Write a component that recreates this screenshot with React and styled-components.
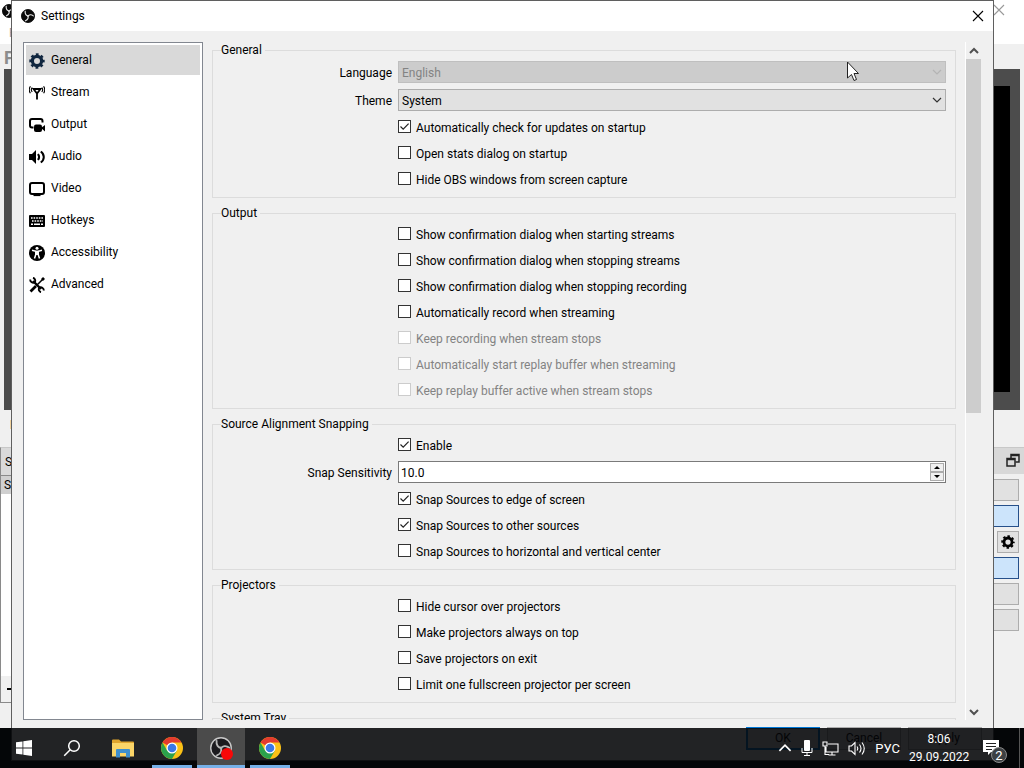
import React from "react"
import styled, { createGlobalStyle } from "styled-components"

const GlobalStyle = createGlobalStyle`
  * {
    box-sizing: border-box;
  }
  body {
    margin: 0;
    overflow: hidden;
  }
  body, button, input, select {
    font-family: Roboto, "Open Sans", sans-serif;
    font-size: 12px;
    line-height: 17px;
    color: #000;
  }
  svg {
    display: block;
    flex: none;
  }
`

const Desktop = styled.div`
  position: relative;
  height: 100vh;
  padding-bottom: 40px;
  overflow: hidden;
  background: #05090f;
`

/* main window, mostly covered by the dialog */

const MainWindow = styled.div`
  display: flex;
  flex-direction: column;
  height: 100%;
  background: #f0f0f0;
`

const MainHeader = styled.div`
  height: 44px;
  padding: 4px 19px 0 2px;
  background: #fff;
  color: #999;
`

const MainTitle = styled.div`
  display: flex;
  justify-content: space-between;
`

const MenuBar = styled.div`
  padding: 7px;
`

const PreviewTitle = styled.div`
  height: 25px;
  padding: 5px 4px;
  font-size: 18px;
  font-weight: bold;
  color: #8c8c8c;
`

const Preview = styled.div`
  flex: 1;
  margin: 0 4px;
  padding: 17px 10px 18px;
  background: #4c4c4c;
`

const PreviewCanvas = styled.div`
  height: 100%;
  background: #000;
`

const SourceBar = styled.div`
  height: 37px;
  padding: 7px 10px;
`

const Docks = styled.div`
  display: flex;
  justify-content: space-between;
  height: 281px;
`

const SceneDock = styled.div`
  width: 200px;
  height: 256px;
  display: flex;
  flex-direction: column;
  border: 1px solid #8a8a8a;
  border-top-color: #c8c8c8;
`

const DockTitle = styled.div`
  height: 27px;
  padding: 6px 4px;
  background: #dadada;
`

const SceneHeader = styled.div`
  height: 19px;
  padding: 1px 3px 0;
  background: #d0d0d0;
  border-top: 1px solid #8a8a8a;
`

const SceneList = styled.div`
  flex: 1;
  background: #fff;
`

const SceneTools = styled.div`
  height: 26px;
  padding: 12px 6px;
`

const Minus = styled.div`
  width: 8px;
  height: 2px;
  background: #000;
`

const ControlsDock = styled.div`
  width: 200px;
`

const ControlsTitle = styled.div`
  display: flex;
  justify-content: flex-end;
  height: 27px;
  padding: 5px 4px;
  margin-bottom: 5px;
  background: #d8d8d8;
  border-top: 1px solid #c8c8c8;
`

const ControlsList = styled.div`
  display: flex;
  flex-direction: column;
  align-items: flex-end;
  gap: 4px;
  padding-right: 5px;
`

const ControlButton = styled.button`
  width: ${props => (props.$small ? "22px" : "100%")};
  height: 22px;
  padding: 3px;
  border: 1px solid ${props => (props.$on ? "#26508a" : "#adadad")};
  background: ${props => (props.$on ? "#cce4fb" : "#e1e1e1")};
`

/* settings dialog */

const Dialog = styled.div`
  position: absolute;
  top: 0;
  right: 30px;
  bottom: 7px;
  left: 11px;
  display: flex;
  flex-direction: column;
  border: 1px solid #5f5f5f;
  background: #f0f0f0;
`

const TitleBar = styled.div`
  display: flex;
  align-items: center;
  gap: 6px;
  height: 30px;
  padding: 0 9px;
  background: #fff;
`

const Title = styled.div`
  flex: 1;
`

const PlainButton = styled.button`
  display: flex;
  align-items: center;
  justify-content: center;
  padding: 0;
  border: 0;
  background: none;
`

const DialogMain = styled.div`
  flex: 1;
  display: flex;
  min-height: 0;
  padding: 11px 12px 0 11px;
`

const Sidebar = styled.nav`
  width: 180px;
  display: flex;
  flex-direction: column;
  gap: 2px;
  padding: 2px;
  margin-right: 9px;
  border: 1px solid #828790;
  background: #fff;
`

const SidebarItem = styled.a`
  display: flex;
  align-items: center;
  gap: 6px;
  height: 30px;
  padding: 1px 3px 0;
  color: #000;
  text-decoration: none;
  background: ${props => (props.$active ? "#d9d9d9" : "none")};
`

const Groups = styled.div`
  flex: 1;
  min-width: 0;
  display: flex;
  flex-direction: column;
  gap: 7px;
  overflow: hidden;
`

const Group = styled.fieldset`
  flex: none;
  min-width: 0;
  margin: 0;
  padding: 2px 9px 8px 8px;
  border: 1px solid #dcdcdc;
`

const GroupTitle = styled.legend`
  padding: 0 3px 0 0;
  line-height: 17px;
  background: #f0f0f0;
`

const GroupGrid = styled.div`
  display: grid;
  grid-template-columns: 171px 1fr;
  gap: 6px;
  align-items: center;
`

const FieldLabel = styled.label`
  padding-top: 2px;
  text-align: right;
`

const CheckRow = styled.label`
  grid-column: 2;
  display: flex;
  align-items: center;
  gap: 5px;
  height: 20px;
  padding-top: 2px;
  color: ${props => (props.$disabled ? "#838383" : "#000")};
`

const CheckBox = styled.input`
  appearance: none;
  width: 13px;
  height: 13px;
  margin: 0 0 3px;
  border: 1px solid #333;
  background: #fff;

  &:disabled {
    border-color: #ccc;
  }
  &:checked {
    background: #fff url("data:image/svg+xml,%3Csvg xmlns='http://www.w3.org/2000/svg' viewBox='0 0 11 11'%3E%3Cpath d='M1.5 5.5 4.2 8.2 9.6 2.6' fill='none' stroke='%23222' stroke-width='1.2'/%3E%3C/svg%3E");
  }
`

const SelectBox = styled.div`
  display: grid;
  align-items: center;
  color: ${props => (props.$disabled ? "#b4b4b4" : "#333")};

  > * {
    grid-area: 1 / 1;
  }
  > svg {
    justify-self: end;
    margin-right: 4px;
    pointer-events: none;
  }
`

const Select = styled.select`
  appearance: none;
  width: 100%;
  height: 22px;
  padding: 2px 3px 0;
  border: 1px solid #adadad;
  border-radius: 0;
  background: #e1e1e1;

  &:disabled {
    border-color: #bfbfbf;
    background: #ccc;
    color: #838383;
    opacity: 1;
  }
`

const SpinBox = styled.div`
  display: flex;
  height: 22px;
  padding: 1px;
  border: 1px solid #7a7a7a;
  background: #fff;
`

const SpinInput = styled.input`
  flex: 1;
  min-width: 0;
  padding: 2px 1px 0;
  border: 0;
  outline: 0;
`

const SpinButtons = styled.div`
  width: 14px;
  display: flex;
  flex-direction: column;
`

const SpinButton = styled(PlainButton)`
  flex: 1;
  border: 1px solid #acacac;
  background: #f0f0f0;
`

const ScrollBar = styled.div`
  width: 16px;
  display: flex;
  flex-direction: column;
  margin-left: 9px;
  border-left: 1px solid #fff;
`

const ScrollButton = styled(PlainButton)`
  height: 17px;
  color: #505050;
`

const ScrollTrack = styled.div`
  flex: 1;
`

const ScrollThumb = styled.div`
  height: 55%;
  background: #cdcdcd;
`

const DialogFooter = styled.div`
  display: flex;
  justify-content: flex-end;
  gap: 7px;
  padding: 7px 11px 10px;
`

const DialogButton = styled.button`
  width: 74px;
  height: 23px;
  padding: 0;
  border: ${props => (props.$primary ? "2px solid #0078d7" : "1px solid #adadad")};
  background: #e1e1e1;
`

/* taskbar */

const Taskbar = styled.div`
  position: absolute;
  right: 0;
  bottom: 0;
  left: 0;
  display: flex;
  height: 40px;
  background: rgba(4, 6, 8, 0.88);
  color: #fff;
`

const TaskButton = styled.button`
  display: flex;
  flex-direction: column;
  align-items: center;
  justify-content: center;
  width: 48px;
  padding: 0;
  border: 0;
  background: ${props => (props.$active ? "#4b4b4b" : "none")};
  color: #fff;
`

const TaskApps = styled.div`
  flex: 1;
  display: flex;
  gap: 1px;
  margin-left: 3px;
`

const AppButton = styled(TaskButton)`
  padding: ${props => (props.$open ? "3px 0 0" : "0")};
  justify-content: ${props => (props.$open ? "space-between" : "center")};

  &::before {
    content: "";
  }
  &::after {
    content: "";
    width: ${props => (props.$active ? "48px" : "40px")};
    height: ${props => (props.$open ? "3px" : "0")};
    background: #76b0e8;
  }
`

const Tray = styled.div`
  display: flex;
  align-items: center;
  gap: 9px;
`

const TrayText = styled.div`
  font-size: 13px;
  color: #fff;
`

const Clock = styled.div`
  width: 60px;
  text-align: center;
  line-height: 18px;
  color: #fff;
`

const Notifications = styled(PlainButton)`
  justify-content: flex-start;
  width: 41px;
  height: 40px;
  padding-left: 5px;
`

const ShowDesktop = styled.div`
  width: 5px;
  height: 40px;
  border-left: 1px solid #555;
`

const TrayEnd = styled.div`
  display: flex;
`

/* one blade of the logo, drawn three times around the centre */
const ObsLogo = ({ size = 14, disc = "#0a0a0a", ring = "#0a0a0a", blade = "#e8e8e8" }) => (
  <svg width={size} height={size} viewBox="0 0 24 24">
    <circle cx="12" cy="12" r="11.200" fill={disc} stroke={ring} strokeWidth="1.500" />
    {[0, 120, 240].map(angle => (
      <path
        key={angle}
        d="M12.500 12C9 11.500 6.500 9 7.200 4.200"
        transform={`rotate(${angle} 12 12)`}
        fill="none"
        stroke={blade}
        strokeWidth="2"
        strokeLinecap="round"
      />
    ))}
  </svg>
)

const GearIcon = ({ size = 16, color = "#000" }) => (
  <svg width={size} height={size} viewBox="0 0 16 16" fill="none" stroke={color}>
    <circle cx="8" cy="8" r="4.6" strokeWidth="3.2" />
    <circle cx="8" cy="8" r="6.6" strokeWidth="2.2" strokeDasharray="2.8 2.384" strokeDashoffset="1.4" />
  </svg>
)

const StreamIcon = () => (
  <svg width="16" height="16" viewBox="0 0 16 16" fill="none" stroke="#000">
    <path d="M4.500 4h7L8 8.500zM8 7v7.500" strokeWidth="1.800" />
    <path d="M3.200 2.500C2 4 2 5.500 3.200 7M12.800 2.500c1.200 1.500 1.200 3 0 4.500M1.400 1.200C-.1 3.500-.1 6 1.400 8.300M14.600 1.200c1.500 2.300 1.500 4.800 0 7.100" strokeWidth="1.100" />
  </svg>
)

const OutputIcon = () => (
  <svg width="16" height="16" viewBox="0 0 16 16">
    <path d="M4.500 10.500H3a2 2 0 0 1-2-2V4a2 2 0 0 1 2-2h8.500a2 2 0 0 1 2 2v1.500" fill="none" stroke="#000" strokeWidth="2" />
    <rect x="5" y="7.500" width="8" height="7.500" rx="2" />
    <path d="m12 11 4-3v6.500z" />
  </svg>
)

const AudioIcon = () => (
  <svg width="16" height="16" viewBox="0 0 16 16">
    <path d="M0 5h3l4-4v14l-4-4H0z" />
    <path d="M9 5c1.500 2 1.500 4 0 6M11.800 2.500c4 3 4 8 0 11" fill="none" stroke="#000" strokeWidth="2" />
  </svg>
)

const VideoIcon = () => (
  <svg width="16" height="16" viewBox="0 0 16 16">
    <rect x="1" y="2" width="14" height="11" rx="2" fill="none" stroke="#000" strokeWidth="2" />
    <path d="M4.500 14.500h7" stroke="#000" strokeWidth="1.200" />
  </svg>
)

const HotkeysIcon = () => (
  <svg width="16" height="16" viewBox="0 0 16 16">
    <rect y="2" width="16" height="12" rx="1" />
    <path d="M2 5h12M3 8h11" stroke="#fff" strokeWidth="1.600" strokeDasharray="1.600 1" />
    <path d="M2 11.200h2m1 0h6m1 0h2" stroke="#fff" strokeWidth="1.500" />
  </svg>
)

const AccessibilityIcon = () => (
  <svg width="16" height="16" viewBox="0 0 16 16">
    <circle cx="8" cy="8" r="8" />
    <circle cx="8" cy="3.200" r="1.500" fill="#fff" />
    <path d="M3 5.300 6.800 6.300v3.200L5.500 13.500M13 5.300 9.200 6.300v3.200l1.300 4" fill="none" stroke="#fff" strokeWidth="1.500" />
    <path d="M6.200 5.700h3.600V10H6.200z" fill="#fff" />
  </svg>
)

const AdvancedIcon = () => (
  <svg width="16" height="16" viewBox="0 0 16 16" fill="none" stroke="#000">
    <path d="m4 4 8 8" strokeWidth="2.400" />
    <path d="M1.200 2.500a3 3 0 0 0 4.600 2.700A3 3 0 0 0 4 .8M14.800 13.500a3 3 0 0 0-4.600-2.700 3 3 0 0 0 1.800 4.400" strokeWidth="1.900" />
    <path d="M14.800 1.200 7.500 8.500" strokeWidth="1.500" />
    <path d="m13 3 2-2M7 9l-5.500 5.500" strokeWidth="2.800" />
  </svg>
)

const CloseIcon = ({ color = "#000" }) => (
  <svg width="12" height="12" viewBox="0 0 12 12" fill="none" stroke={color}>
    <path d="m1 1 10 10M11 1 1 11" strokeWidth="1.100" />
  </svg>
)

const Chevron = ({ up, bold, size = 10 }) => (
  <svg width={size} height={size} viewBox="0 0 10 10" fill="none" stroke="currentColor">
    <path d={up ? "m1 7 4-4 4 4" : "m1 3 4 4 4-4"} strokeWidth={bold ? 2 : 1.2} />
  </svg>
)

const Triangle = ({ up }) => (
  <svg width="6" height="3" viewBox="0 0 6 3">
    <path d={up ? "M0 3 3 0l3 3z" : "M0 0l3 3 3-3z"} />
  </svg>
)

const FloatIcon = () => (
  <svg width="14" height="14" viewBox="0 0 14 14" fill="none" stroke="#222" strokeWidth="1.500">
    <path d="M5 5V1.500h8V9H9.500M5 2.500h8" />
    <path d="M1 5.500h8V13H1zM1 6.500h8" />
  </svg>
)

const Cursor = styled.svg`
  position: absolute;
  top: 61px;
  left: 846px;
  pointer-events: none;
`

const StartIcon = () => (
  <svg width="16" height="16" viewBox="0 0 16 16" fill="#fff">
    <path d="M0 2.300 6.500 1.400v6.200H0zM7.300 1.300 16 0v7.600H7.300zM0 8.400h6.500v6.200L0 13.700zM7.300 8.400H16V16l-8.700-1.300z" />
  </svg>
)

const SearchIcon = () => (
  <svg width="18" height="18" viewBox="0 0 18 18" fill="none" stroke="#fff" strokeWidth="1.500">
    <circle cx="11" cy="7" r="5.300" />
    <path d="m7.200 10.800-6 6" />
  </svg>
)

const FolderIcon = () => (
  <svg width="22" height="19" viewBox="0 0 22 19">
    <path d="M0 1.500Q0 .5 1 .5h6l2 2h12q1 0 1 1V17H0z" fill="#e0a52e" />
    <path d="M0 4h22v13.500H0z" fill="#fbd568" />
    <path d="M4 18.500V11q0-1 1-1h12q1 0 1 1v7.500h-4V14H8v4.500z" fill="#3f8fcd" />
  </svg>
)

const ChromeIcon = () => (
  <svg width="22" height="22" viewBox="0 0 22 22">
    <circle cx="11" cy="11" r="11" fill="#fbc116" />
    <path d="M11 11 1.500 5.500A11 11 0 0 1 20.500 5.500H11z" fill="#e33b2e" />
    <path d="M1.500 5.500A11 11 0 0 0 11 22l4.800-8.200L11 11 6.200 13.800z" fill="#2ba24c" />
    <circle cx="11" cy="11" r="5.500" fill="#fff" />
    <circle cx="11" cy="11" r="4.300" fill="#3b78e7" />
  </svg>
)

const LiveLogo = styled.span`
  position: relative;

  &::after {
    content: "";
    position: absolute;
    right: -1px;
    bottom: -1px;
    width: 12px;
    height: 12px;
    border-radius: 50%;
    background: #f80808;
  }
`

const MicIcon = () => (
  <svg width="12" height="16" viewBox="0 0 12 16">
    <rect x="3" y="0" width="6" height="11" rx="1" fill="#fff" />
    <path d="M1 8v4.500h10V8M6 12v3M3 15.500h6" fill="none" stroke="#fff" />
  </svg>
)

const NetworkIcon = () => (
  <svg width="17" height="15" viewBox="0 0 17 15" fill="none" stroke="#fff" strokeWidth="1.100">
    <path d="M6 3h10v8H4V6M10 11v3M6.500 14h7M1 1h4v4H1zM3 5v8.500h4" />
  </svg>
)

const VolumeIcon = () => (
  <svg width="18" height="15" viewBox="0 0 18 15" fill="none" stroke="#fff" strokeWidth="1.100">
    <path d="M1 5h2.500L7 1.500v12L3.500 10H1zM9 5.500q1.500 2 0 4M11.500 3.500q3 4 0 8M14 1.500q4.500 6 0 12" />
  </svg>
)

const NotificationIcon = () => (
  <svg width="26" height="32" viewBox="0 0 26 32">
    <path d="M0 8h16v12H8l-3 3v-3H0z" fill="#fff" />
    <path d="M3 11.500h10M3 14.500h10M3 17.500h6" stroke="#222" />
    <circle cx="16" cy="23" r="7.500" fill="#3c4043" stroke="#8a8a8a" />
    <text x="16" y="27.500" fill="#fff" fontSize="13" textAnchor="middle">2</text>
  </svg>
)

const sections = [
  ["General", () => <GearIcon color="#10263f" />],
  ["Stream", StreamIcon],
  ["Output", OutputIcon],
  ["Audio", AudioIcon],
  ["Video", VideoIcon],
  ["Hotkeys", HotkeysIcon],
  ["Accessibility", AccessibilityIcon],
  ["Advanced", AdvancedIcon],
]

const Check = ({ children, checked, disabled }) => (
  <CheckRow $disabled={disabled}>
    <CheckBox type="checkbox" defaultChecked={checked} disabled={disabled} />
    {children}
  </CheckRow>
)

const Field = ({ id, label, value, disabled }) => (
  <>
    <FieldLabel htmlFor={id}>{label}</FieldLabel>
    <SelectBox $disabled={disabled}>
      <Select id={id} disabled={disabled}>
        <option>{value}</option>
      </Select>
      <Chevron />
    </SelectBox>
  </>
)

const SettingsGroup = ({ title, children }) => (
  <Group>
    <GroupTitle>{title}</GroupTitle>
    <GroupGrid>{children}</GroupGrid>
  </Group>
)

const Main = () => (
  <MainWindow>
    <MainHeader>
      <MainTitle>
        <ObsLogo />
        <CloseIcon color="#999" />
      </MainTitle>
      <MenuBar>F</MenuBar>
    </MainHeader>
    <PreviewTitle>P</PreviewTitle>
    <Preview>
      <PreviewCanvas />
    </Preview>
    <SourceBar>N</SourceBar>
    <Docks>
      <SceneDock>
        <DockTitle>S</DockTitle>
        <SceneHeader>Sc</SceneHeader>
        <SceneList />
        <SceneTools>
          <Minus />
        </SceneTools>
      </SceneDock>
      <ControlsDock>
        <ControlsTitle>
          <FloatIcon />
        </ControlsTitle>
        <ControlsList>
          <ControlButton />
          <ControlButton $on />
          <ControlButton $small aria-label="Configure">
            <GearIcon size={14} />
          </ControlButton>
          <ControlButton $on />
          <ControlButton />
          <ControlButton />
        </ControlsList>
      </ControlsDock>
    </Docks>
  </MainWindow>
)

const Settings = () => (
  <Dialog role="dialog" aria-label="Settings">
    <TitleBar>
      <ObsLogo />
      <Title>Settings</Title>
      <PlainButton aria-label="Close">
        <CloseIcon />
      </PlainButton>
    </TitleBar>
    <DialogMain>
      <Sidebar>
        {sections.map(([name, Icon], i) => (
          <SidebarItem key={name} href={"#" + name.toLowerCase()} $active={i === 0}>
            <Icon />
            {name}
          </SidebarItem>
        ))}
      </Sidebar>
      <Groups>
        <SettingsGroup title="General">
          <Field id="language" label="Language" value="English" disabled />
          <Field id="theme" label="Theme" value="System" />
          <Check checked>Automatically check for updates on startup</Check>
          <Check>Open stats dialog on startup</Check>
          <Check>Hide OBS windows from screen capture</Check>
        </SettingsGroup>
        <SettingsGroup title="Output">
          <Check>Show confirmation dialog when starting streams</Check>
          <Check>Show confirmation dialog when stopping streams</Check>
          <Check>Show confirmation dialog when stopping recording</Check>
          <Check>Automatically record when streaming</Check>
          <Check disabled>Keep recording when stream stops</Check>
          <Check disabled>Automatically start replay buffer when streaming</Check>
          <Check disabled>Keep replay buffer active when stream stops</Check>
        </SettingsGroup>
        <SettingsGroup title="Source Alignment Snapping">
          <Check checked>Enable</Check>
          <FieldLabel htmlFor="snap">Snap Sensitivity</FieldLabel>
          <SpinBox>
            <SpinInput id="snap" defaultValue="10.0" />
            <SpinButtons>
              <SpinButton aria-label="Increase"><Triangle up /></SpinButton>
              <SpinButton aria-label="Decrease"><Triangle /></SpinButton>
            </SpinButtons>
          </SpinBox>
          <Check checked>Snap Sources to edge of screen</Check>
          <Check checked>Snap Sources to other sources</Check>
          <Check>Snap Sources to horizontal and vertical center</Check>
        </SettingsGroup>
        <SettingsGroup title="Projectors">
          <Check>Hide cursor over projectors</Check>
          <Check>Make projectors always on top</Check>
          <Check>Save projectors on exit</Check>
          <Check>Limit one fullscreen projector per screen</Check>
        </SettingsGroup>
        <SettingsGroup title="System Tray" />
      </Groups>
      <ScrollBar>
        <ScrollButton aria-label="Scroll up"><Chevron up bold /></ScrollButton>
        <ScrollTrack>
          <ScrollThumb />
        </ScrollTrack>
        <ScrollButton aria-label="Scroll down"><Chevron bold /></ScrollButton>
      </ScrollBar>
    </DialogMain>
    <DialogFooter>
      <DialogButton $primary>OK</DialogButton>
      <DialogButton>Cancel</DialogButton>
      <DialogButton>Apply</DialogButton>
    </DialogFooter>
  </Dialog>
)

export default function App() {
  return (
    <Desktop>
      <GlobalStyle />
      <Main />
      <Settings />
      <Taskbar>
        <TaskButton aria-label="Start"><StartIcon /></TaskButton>
        <TaskButton aria-label="Search"><SearchIcon /></TaskButton>
        <TaskApps>
          <AppButton aria-label="File Explorer"><FolderIcon /></AppButton>
          <AppButton $open aria-label="Chrome"><ChromeIcon /></AppButton>
          <AppButton $open $active aria-label="OBS">
            <LiveLogo>
              <ObsLogo size={22} disc="#1c1b1f" ring="#c8c8c8" blade="#b8b8b8" />
            </LiveLogo>
          </AppButton>
          <AppButton $open aria-label="Chrome"><ChromeIcon /></AppButton>
        </TaskApps>
        <Tray>
          <Chevron up size={14} />
          <MicIcon />
          <NetworkIcon />
          <VolumeIcon />
          <TrayText>РУС</TrayText>
          <Clock>
            8:06
            <br />
            29.09.2022
          </Clock>
          <TrayEnd>
            <Notifications aria-label="Notifications"><NotificationIcon /></Notifications>
            <ShowDesktop />
          </TrayEnd>
        </Tray>
      </Taskbar>
      <Cursor width="16" height="22" viewBox="0 0 16 22">
        <path d="M1.500 1v16l4-3.500 2.500 6 2.500-1-2.500-6h4.500z" fill="#fff" stroke="#222" />
      </Cursor>
    </Desktop>
  )
}
